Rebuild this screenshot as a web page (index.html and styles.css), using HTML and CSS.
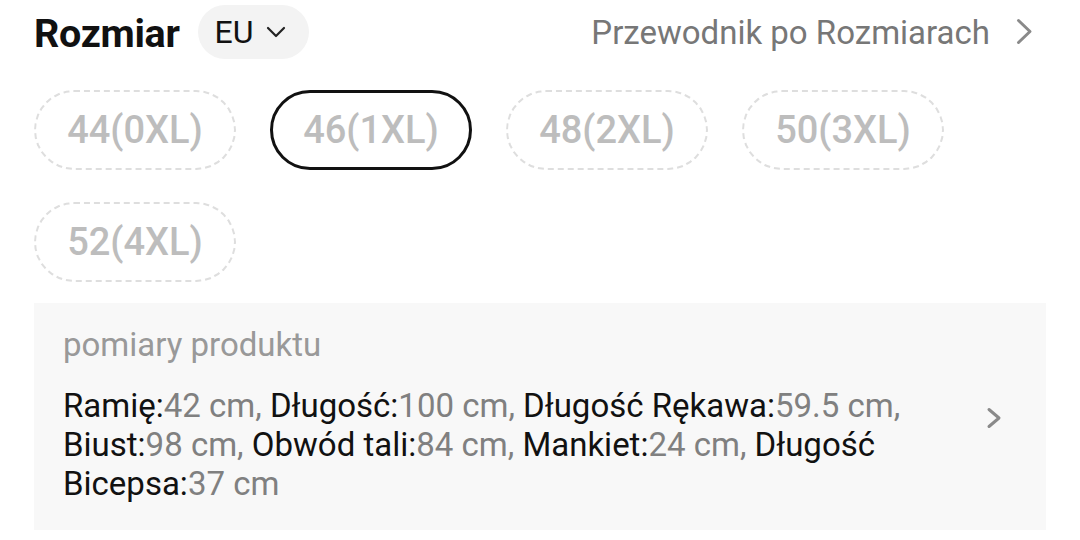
FILE: index.html
```html
<!DOCTYPE html>
<html lang="pl">
<head>
<meta charset="utf-8">
<link rel="stylesheet" href="styles.css">
</head>
<body>
<div class="page">
  <div class="header">
    <div class="left">
      <span class="title">Rozmiar</span>
      <span class="unit">EU
        <svg class="unit-chev" width="22" height="12" viewBox="0 0 22 12"><path d="M3 2 L11 10 L19 2" fill="none" stroke="#222" stroke-width="2.2" stroke-linecap="round" stroke-linejoin="round"/></svg>
      </span>
    </div>
    <div class="guide">Przewodnik po Rozmiarach
      <svg class="guide-chev" width="17" height="27" viewBox="0 0 17 27"><path d="M2.5 2.5 L14 13.5 L2.5 24.5" fill="none" stroke="#8a8a8a" stroke-width="3" stroke-linecap="round" stroke-linejoin="round"/></svg>
    </div>
  </div>
  <div class="sizes">
    <div class="chip">44(0XL)</div>
    <div class="chip selected">46(1XL)</div>
    <div class="chip">48(2XL)</div>
    <div class="chip">50(3XL)</div>
    <div class="chip">52(4XL)</div>
  </div>
  <div class="measure">
    <div class="measure-label">pomiary produktu</div>
    <div class="measure-row">
      <p class="measure-text"><span class="k">Ramię:</span><span class="v">42 cm, </span><span class="k">Długość:</span><span class="v">100 cm, </span><span class="k">Długość Rękawa:</span><span class="v">59.5 cm, </span><span class="k">Biust:</span><span class="v">98 cm, </span><span class="k">Obwód tali:</span><span class="v">84 cm, </span><span class="k">Mankiet:</span><span class="v">24 cm, </span><span class="k">Długość Bicepsa:</span><span class="v">37 cm</span></p>
      <svg class="measure-chev" width="17" height="22" viewBox="0 0 17 22"><path d="M3 2.5 L13 11 L3 19.5" fill="none" stroke="#8a8a8a" stroke-width="3" stroke-linecap="round" stroke-linejoin="round"/></svg>
    </div>
  </div>
</div>
</body>
</html>
```

FILE: styles.css
```css
html, body {
  margin: 0;
  padding: 0;
  background: #fff;
}
body {
  font-family: Roboto, "Noto Sans", sans-serif;
  color: #111;
}
.page {
  width: 1080px;
  height: 540px;
  box-sizing: border-box;
  padding: 0 34px;
  overflow: hidden;
}
.header {
  height: 64px;
  display: flex;
  align-items: center;
  justify-content: space-between;
}
.left {
  display: flex;
  align-items: center;
  gap: 18px;
}
.title {
  font-size: 39.5px;
  font-weight: 700;
  color: #111;
  letter-spacing: -0.3px;
  padding-top: 2px;
}
.unit {
  display: inline-flex;
  align-items: center;
  gap: 11px;
  height: 54px;
  padding: 0 22px 0 17px;
  border-radius: 27px;
  background: #f3f3f3;
  font-size: 32px;
  color: #111;
}
.guide {
  display: flex;
  align-items: center;
  gap: 26px;
  font-size: 33px;
  color: #777;
  padding-right: 13px;
}
.guide-chev {
  margin-top: -2px;
}
.sizes {
  display: flex;
  flex-wrap: wrap;
  column-gap: 34px;
  row-gap: 32px;
  padding-top: 26px;
}
.chip {
  width: 202px;
  height: 80px;
  box-sizing: border-box;
  border: 2px dashed #dedede;
  border-radius: 40px;
  display: flex;
  align-items: center;
  justify-content: center;
  font-size: 38px;
  font-weight: 500;
  color: #bdbdbd;
}
.chip.selected {
  border: 3px solid #111;
}
.measure {
  margin-top: 21px;
  background: #f8f8f8;
  padding: 22px 43px 22px 29px;
  height: 227px;
  box-sizing: border-box;
}
.measure-label {
  font-size: 33px;
  color: #999;
  line-height: 40px;
}
.measure-row {
  display: flex;
  align-items: flex-start;
  justify-content: space-between;
  margin-top: 21px;
}
.measure-text {
  margin: 0;
  width: 915px;
  font-size: 33px;
  line-height: 39px;
}
.k { color: #111; }
.v { color: #808080; }
.measure-chev {
  flex-shrink: 0;
  margin-top: 21px;
}
```
